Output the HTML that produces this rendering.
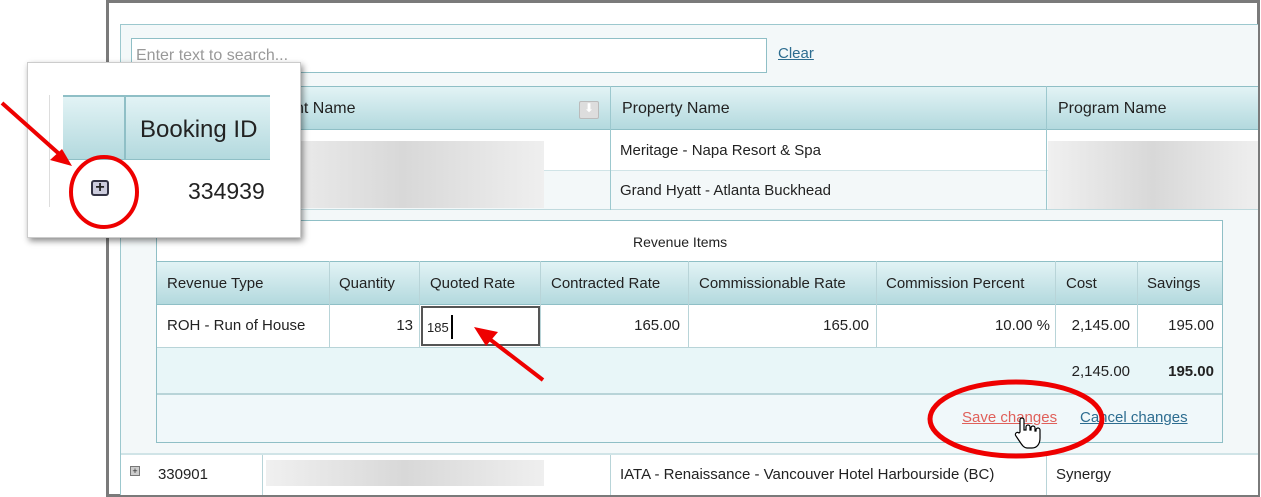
<!DOCTYPE html>
<html><head><style>
*{margin:0;padding:0;box-sizing:border-box}
body{width:1261px;height:497px;background:#fff;position:relative;overflow:hidden;font-family:"Liberation Sans",sans-serif;color:#222;font-size:15px}
.a{position:absolute}
.hdr{background:linear-gradient(#e2f3f5,#b3d9de);border-top:1px solid #8fbfc6;border-bottom:1px solid #8fbfc6}
.vl{position:absolute;width:1px;background:#b8d4d8}
.blur{background:linear-gradient(90deg,#f0f0f0,#d8d8d8 50%,#efefef)}
.t{position:absolute;white-space:nowrap;margin-top:2px}
</style></head><body>
<div class="a" style="left:106px;top:0;width:1154px;height:497px;border:3px solid #7a7a7a"></div>
<div class="a" style="left:120px;top:24px;width:1138px;height:471px;background:#f3f8f9;border:1px solid #9cc8ce;border-right:none"></div>
<div class="a" style="left:131px;top:38px;width:636px;height:35px;background:#fff;border:1px solid #8fbfc6"></div>
<div class="t" style="left:136px;top:45px;color:#999;font-size:16px">Enter text to search...</div>
<div class="t" style="left:778px;top:43px;color:#2d6d90;text-decoration:underline;font-size:15px">Clear</div>
<div class="a hdr" style="left:124px;top:86px;width:1134px;height:44px"></div>
<div class="t" style="left:295px;top:98px;font-size:16px">nt Name</div>
<div class="a" style="left:579px;top:101px;width:20px;height:18px;background:#ddd;border:1px solid #bbb;border-radius:2px"></div>
<div class="t" style="left:584px;top:99px;color:#fff;font-size:12px">⬇</div>
<div class="t" style="left:622px;top:98px;font-size:16px">Property Name</div>
<div class="t" style="left:1058px;top:98px;font-size:16px">Program Name</div>
<div class="a" style="left:124px;top:130px;width:1134px;height:40px;background:#fff"></div>
<div class="a" style="left:124px;top:170px;width:1134px;height:40px;background:#f3f8f9;border-top:1px solid #d0e4e7;border-bottom:1px solid #c0dade"></div>
<div class="vl" style="left:610px;top:86px;height:124px;background:#9cc8ce"></div>
<div class="vl" style="left:1046px;top:86px;height:124px;background:#9cc8ce"></div>
<div class="a blur" style="left:262px;top:141px;width:282px;height:67px"></div>
<div class="a blur" style="left:1048px;top:141px;width:210px;height:68px"></div>
<div class="t" style="left:620px;top:140px">Meritage - Napa Resort &amp; Spa</div>
<div class="t" style="left:620px;top:180px">Grand Hyatt - Atlanta Buckhead</div>
<div class="a" style="left:156px;top:220px;width:1067px;height:223px;background:#fff;border:1px solid #8fbfc6"></div>
<div class="t" style="left:633px;top:232px;font-size:14px">Revenue Items</div>
<div class="a hdr" style="left:157px;top:261px;width:1065px;height:44px"></div>
<div class="a" style="left:157px;top:347px;width:1065px;height:46px;background:#e8f6f8;border-top:1px solid #b8d4d8"></div>
<div class="a" style="left:157px;top:393px;width:1065px;height:49px;background:#f0f8fa;border-top:2px solid #b8d4d8"></div>
<div class="vl" style="left:329px;top:261px;height:86px"></div>
<div class="vl" style="left:419px;top:261px;height:86px"></div>
<div class="vl" style="left:540px;top:261px;height:86px"></div>
<div class="vl" style="left:688px;top:261px;height:86px"></div>
<div class="vl" style="left:876px;top:261px;height:86px"></div>
<div class="vl" style="left:1055px;top:261px;height:86px"></div>
<div class="vl" style="left:1137px;top:261px;height:86px"></div>
<div class="t" style="left:167px;top:273px">Revenue Type</div>
<div class="t" style="left:339px;top:273px">Quantity</div>
<div class="t" style="left:430px;top:273px">Quoted Rate</div>
<div class="t" style="left:551px;top:273px">Contracted Rate</div>
<div class="t" style="left:699px;top:273px">Commissionable Rate</div>
<div class="t" style="left:886px;top:273px">Commission Percent</div>
<div class="t" style="left:1066px;top:273px">Cost</div>
<div class="t" style="left:1147px;top:273px">Savings</div>
<div class="t" style="left:167px;top:315px">ROH - Run of House</div>
<div class="t" style="right:848px;top:315px">13</div>
<div class="a" style="left:421px;top:306px;width:119px;height:40px;border:2px solid #555;background:#fff"></div>
<div class="t" style="left:427px;top:318px;font-size:13px">185</div>
<div class="a" style="left:451px;top:315px;width:2px;height:24px;background:#000"></div>
<div class="t" style="right:581px;top:315px">165.00</div>
<div class="t" style="right:392px;top:315px">165.00</div>
<div class="t" style="right:211px;top:315px">10.00 %</div>
<div class="t" style="right:131px;top:315px">2,145.00</div>
<div class="t" style="right:47px;top:315px">195.00</div>
<div class="t" style="right:131px;top:361px">2,145.00</div>
<div class="t" style="right:47px;top:361px;font-weight:bold">195.00</div>
<div class="t" style="left:962px;top:407px;color:#e0605a;text-decoration:underline">Save changes</div>
<div class="t" style="left:1080px;top:407px;color:#2d6d90;text-decoration:underline">Cancel changes</div>
<div class="a" style="left:121px;top:453px;width:1137px;height:42px;background:#fff;border-top:2px solid #d0e4e7"></div>
<div class="vl" style="left:262px;top:455px;height:40px"></div>
<div class="vl" style="left:610px;top:455px;height:40px"></div>
<div class="vl" style="left:1046px;top:455px;height:40px"></div>
<div class="a" style="left:130px;top:466px;width:10px;height:10px;background:#ccc;border:1px solid #777;font-size:9px;line-height:8px;text-align:center">+</div>
<div class="t" style="right:1053px;top:464px">330901</div>
<div class="a blur" style="left:266px;top:460px;width:278px;height:26px"></div>
<div class="t" style="left:620px;top:464px">IATA - Renaissance - Vancouver Hotel Harbourside (BC)</div>
<div class="t" style="left:1056px;top:464px">Synergy</div>
<div class="a" style="left:27px;top:62px;width:274px;height:176px;background:#fff;box-shadow:2px 3px 6px rgba(0,0,0,.45);border:1px solid #ccc"></div>
<div class="a" style="left:49px;top:95px;width:1px;height:112px;background:#ddd"></div>
<div class="a hdr" style="left:63px;top:95px;width:207px;height:65px;border-top:2px solid #8fbfc6"></div>
<div class="a" style="left:124px;top:95px;width:2px;height:65px;background:#8fbfc6"></div>
<div class="t" style="left:140px;top:114px;font-size:24px">Booking ID</div>
<div class="a" style="left:91px;top:180px;width:18px;height:16px;background:#ccd;border:2px solid #334;border-radius:3px;font-size:16px;line-height:12px;text-align:center;font-weight:bold">+</div>
<div class="t" style="left:188px;top:176px;font-size:23px">334939</div>
<svg class="a" style="left:0;top:0" width="1261" height="497">
<ellipse cx="104" cy="192" rx="33" ry="35" fill="none" stroke="#e00" stroke-width="4"/>
<line x1="2" y1="103" x2="66" y2="160" stroke="#e00" stroke-width="4"/>
<polygon points="72,166 50,160 62,149" fill="#e00"/>
<line x1="543" y1="380" x2="483" y2="334" stroke="#e00" stroke-width="4"/>
<polygon points="474,327 498,332 486,346" fill="#e00"/>
<ellipse cx="1016" cy="419" rx="86" ry="37" fill="none" stroke="#e00" stroke-width="5"/>
<path d="M1020 432 v-12 a2 2 0 0 1 4 0 v10 h2 v-3 a2 2 0 0 1 4 0 v3 h1 v-2 a2 2 0 0 1 4 0 v3 h1 v-1 a2 2 0 0 1 4 0 v8 c0 6-3 10-8 10 h-5 c-3 0-5-3-7-6 l-4-6 a2 2 0 0 1 3-3 z" fill="#fff" stroke="#000" stroke-width="1.2"/>
</svg>
</body></html>
